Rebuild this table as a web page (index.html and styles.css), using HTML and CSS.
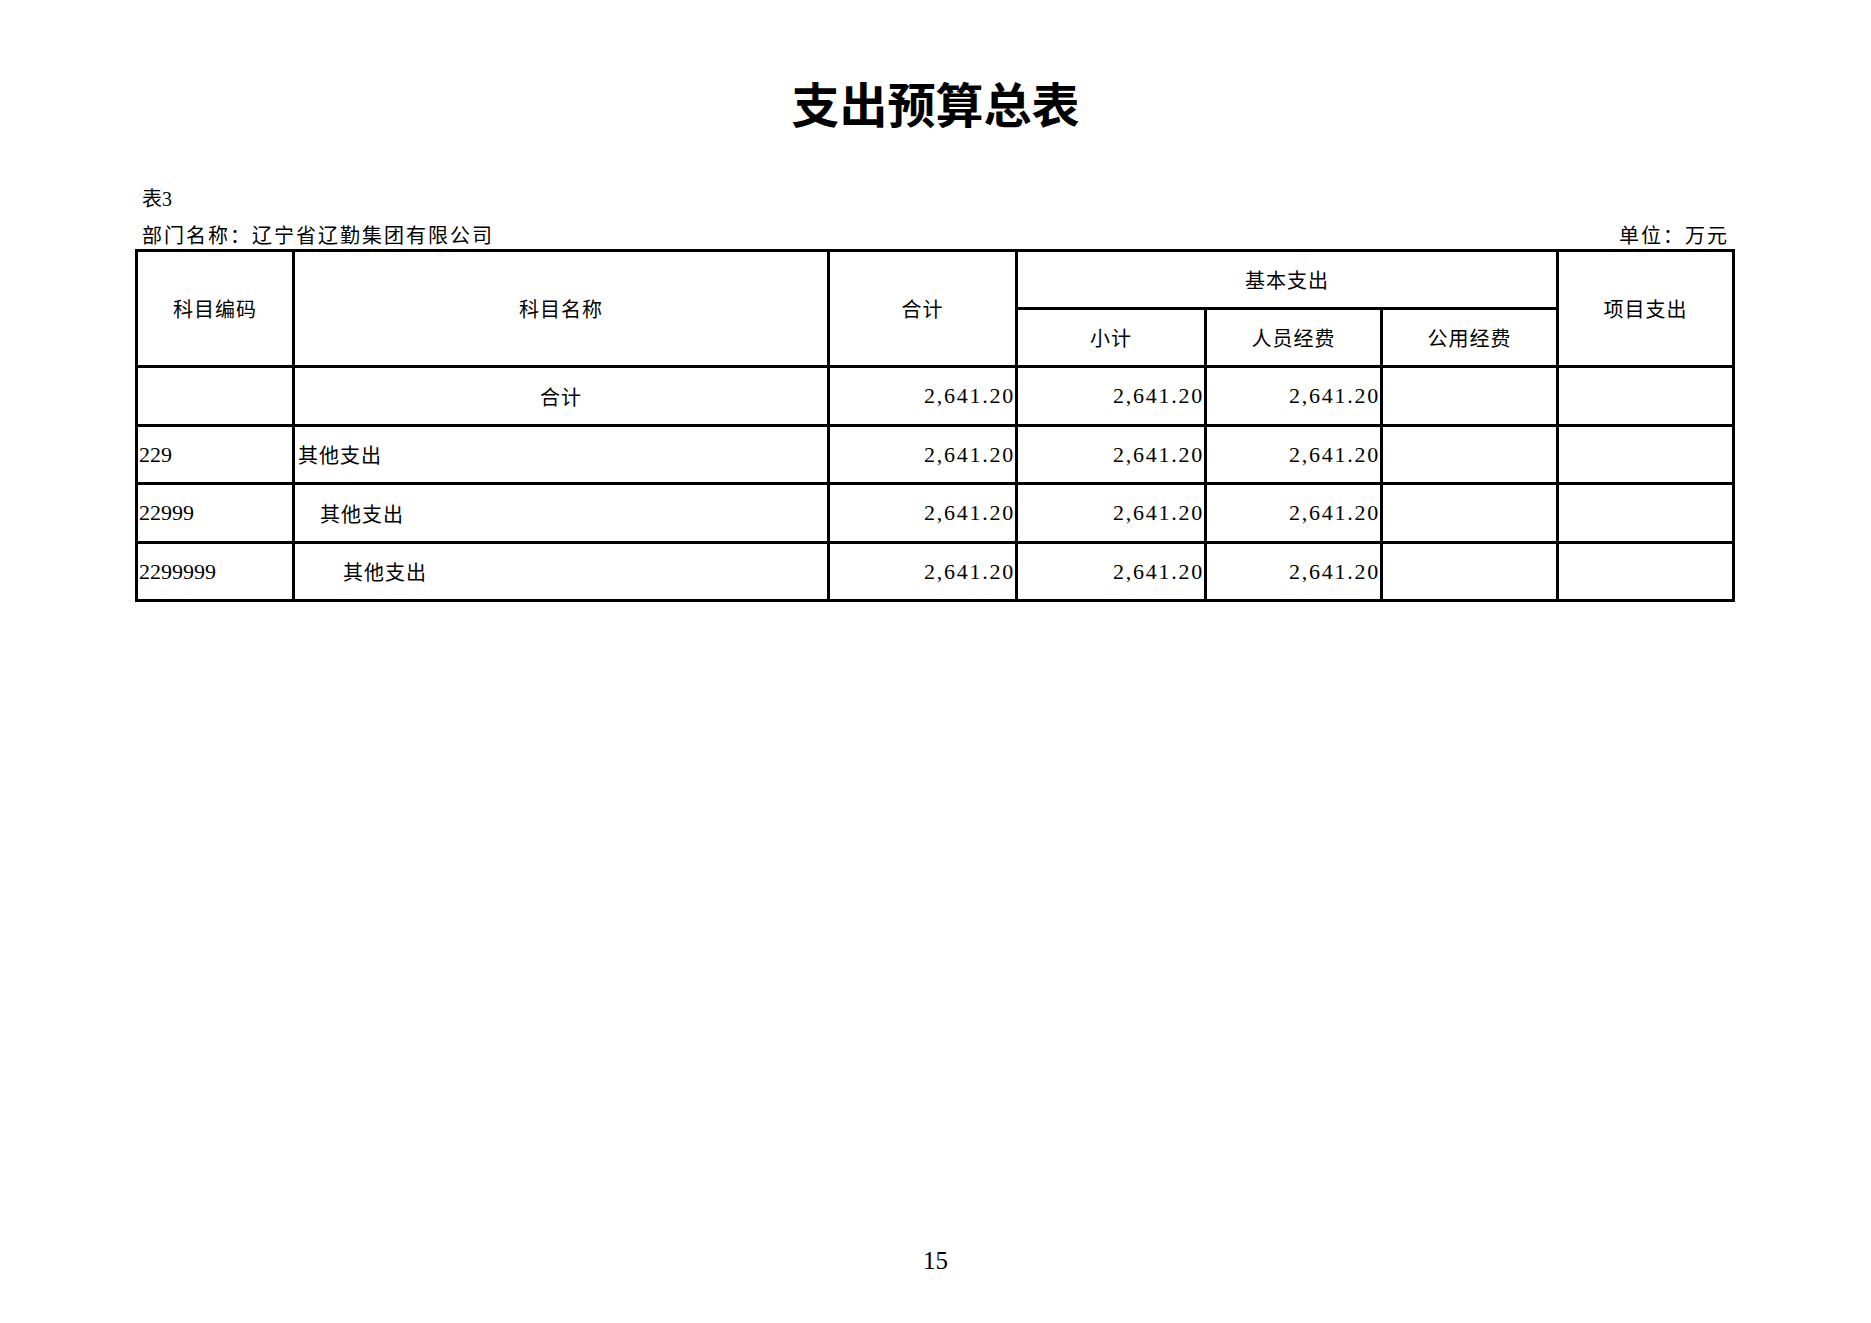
FILE: index.html
```html
<!DOCTYPE html>
<html lang="zh-CN">
<head>
<meta charset="utf-8">
<title>支出预算总表</title>
<link rel="stylesheet" href="styles.css">
</head>
<body>
<div class="page">
  <h1 class="title">支出预算总表</h1>
  <div class="meta">
    <div class="table-no">表<span class="num">3</span></div>
    <div class="dept-line">
      <span class="dept">部门名称：辽宁省辽勤集团有限公司</span>
      <span class="unit">单位：万元</span>
    </div>
  </div>
  <table class="budget">
    <colgroup>
      <col class="c-code">
      <col class="c-name">
      <col class="c-total">
      <col class="c-sub">
      <col class="c-staff">
      <col class="c-public">
      <col class="c-project">
    </colgroup>
    <thead>
      <tr class="h1">
        <th rowspan="2">科目编码</th>
        <th rowspan="2">科目名称</th>
        <th rowspan="2">合计</th>
        <th colspan="3">基本支出</th>
        <th rowspan="2">项目支出</th>
      </tr>
      <tr class="h2">
        <th>小计</th>
        <th>人员经费</th>
        <th>公用经费</th>
      </tr>
    </thead>
    <tbody>
      <tr class="r-a">
        <td class="code"></td>
        <td class="name center">合计</td>
        <td class="amt">2,641.20</td>
        <td class="amt">2,641.20</td>
        <td class="amt">2,641.20</td>
        <td class="amt"></td>
        <td class="amt"></td>
      </tr>
      <tr class="r-b">
        <td class="code">229</td>
        <td class="name">其他支出</td>
        <td class="amt">2,641.20</td>
        <td class="amt">2,641.20</td>
        <td class="amt">2,641.20</td>
        <td class="amt"></td>
        <td class="amt"></td>
      </tr>
      <tr class="r-a">
        <td class="code">22999</td>
        <td class="name lvl2">其他支出</td>
        <td class="amt">2,641.20</td>
        <td class="amt">2,641.20</td>
        <td class="amt">2,641.20</td>
        <td class="amt"></td>
        <td class="amt"></td>
      </tr>
      <tr class="r-b">
        <td class="code">2299999</td>
        <td class="name lvl3">其他支出</td>
        <td class="amt">2,641.20</td>
        <td class="amt">2,641.20</td>
        <td class="amt">2,641.20</td>
        <td class="amt"></td>
        <td class="amt"></td>
      </tr>
    </tbody>
  </table>
  <div class="page-no">15</div>
</div>
</body>
</html>
```
FILE: styles.css
```css
html, body {
  margin: 0;
  padding: 0;
  background: #fff;
}
body {
  font-family: "Noto Sans CJK SC", "Liberation Serif", sans-serif;
  color: #000;
}
.page {
  width: 1599px;
  height: 1323px;
  margin: 0 auto;
  display: flex;
  flex-direction: column;
  box-sizing: border-box;
  padding-top: 72px;
  padding-bottom: 47px;
}
.title {
  margin: 0;
  font-size: 48px;
  line-height: 60px;
  font-weight: 700;
  text-align: center;
  letter-spacing: 0;
}
.meta {
  margin-top: 52px;
  padding-left: 6px;
  padding-right: 6px;
}
.table-no {
  font-size: 20px;
  line-height: 28px;
}
.table-no .num {
  font-family: "Liberation Serif", serif;
}
.dept-line {
  margin-top: 8px;
  display: flex;
  justify-content: space-between;
  font-size: 20px;
  line-height: 28px;
  letter-spacing: 2px;
}
.budget {
  margin-top: 0;
  margin-left: -1px;
  width: 1597px;
  border-collapse: collapse;
  table-layout: fixed;
  font-size: 20px;
}
.c-code { width: 157px; }
.c-name { width: 535px; }
.c-total { width: 188px; }
.c-sub { width: 189px; }
.c-staff { width: 176px; }
.c-public { width: 176px; }
.c-project { width: 176px; }
.budget th,
.budget td {
  border: 3px solid #000;
  padding: 0;
  vertical-align: middle;
  font-weight: 400;
  white-space: nowrap;
}
.budget th {
  text-align: center;
  letter-spacing: 1px;
}
.budget .h1 { height: 58px; }
.budget .h2 { height: 58px; }
.budget .r-a { height: 59px; }
.budget .r-b { height: 58px; }
.budget td.code {
  font-family: "Liberation Serif", serif;
  font-size: 22px;
  text-align: left;
  padding-left: 1px;
}
.budget td.name {
  text-align: left;
  padding-left: 3px;
  letter-spacing: 1px;
}
.budget td.name.center {
  text-align: center;
  padding-left: 0;
}
.budget td.name.lvl2 { padding-left: 25px; }
.budget td.name.lvl3 { padding-left: 48px; }
.budget td.amt {
  font-family: "Liberation Serif", serif;
  font-size: 22px;
  text-align: right;
  padding-right: 0;
  letter-spacing: 1.75px;
}
.page-no {
  margin-top: auto;
  text-align: center;
  font-family: "Liberation Serif", serif;
  font-size: 25px;
  line-height: 30px;
}
```
